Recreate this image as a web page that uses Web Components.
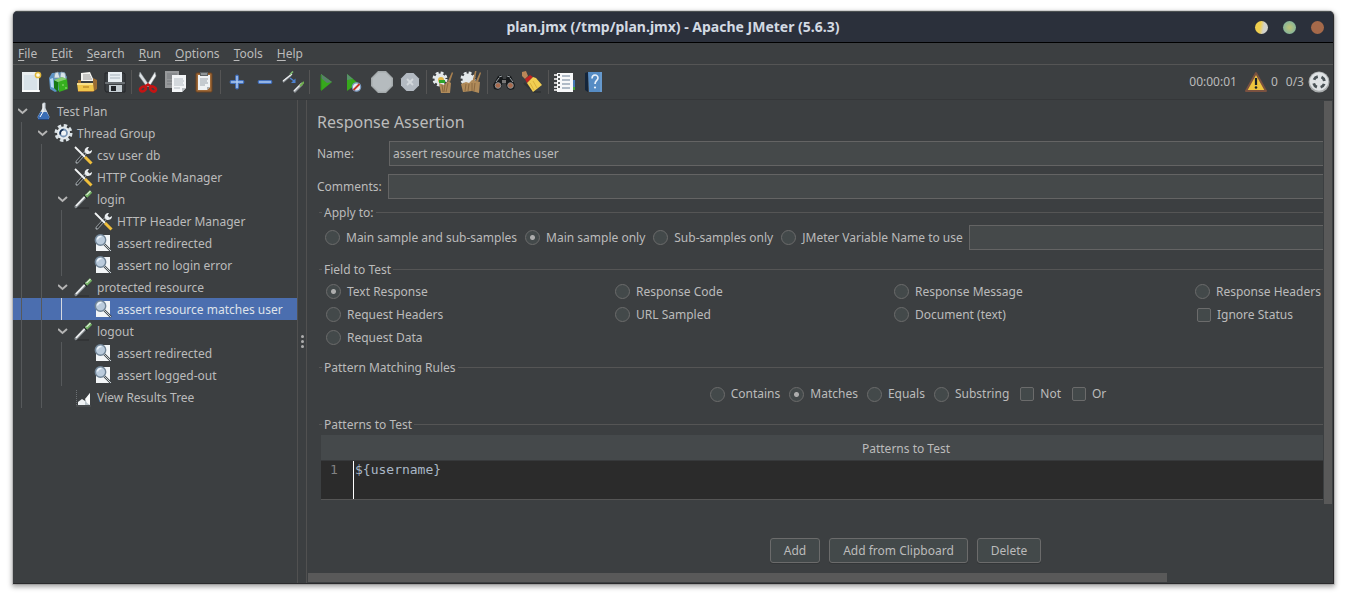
<!DOCTYPE html>
<html lang="en">
<head>
<meta charset="utf-8">
<title>plan.jmx (/tmp/plan.jmx) - Apache JMeter (5.6.3)</title>
<style>
  :root {
    --bg: #3c3f41;
    --text: #bbbbbb;
    --line: #515151;
    --field: #45494a;
    --edge: #646464;
    --thumb: #595959;
    --select: #4b6eaf;
  }
  html, body { height: 100%; }
  body {
    margin: 0;
    box-sizing: border-box;
    padding: 11px 13px 16px;
    background: #fff;
    color: var(--text);
    font: 12px/18px "Noto Sans", "Open Sans", sans-serif;
  }
</style>
</head>
<body>
<jm-app></jm-app>

<template id="jm-app">
  <style>
    :host { display: flex; flex-direction: column; height: 100%; box-sizing: border-box; min-height: 572px;
      background: var(--bg); border-radius: 5px 5px 0 0; overflow: hidden;
      box-shadow: 0 0 0 1px rgba(0,0,0,.1), 0 2px 5px 1px rgba(0,0,0,.35); border-right: 1px solid #2a2a2c; border-bottom: 1px solid #2a2a2c; }
    main { flex: 1; display: flex; min-height: 0; }
    jm-tree { flex: 0 0 284px; border-right: 1px solid var(--line); }
    jm-splitter { flex: 0 0 8px; border-right: 1px solid var(--line); }
    jm-scroll-pane { flex: 1; min-width: 0; }
  </style>
  <jm-titlebar>plan.jmx (/tmp/plan.jmx) - Apache JMeter (5.6.3)</jm-titlebar>
  <jm-menubar></jm-menubar>
  <jm-toolbar></jm-toolbar>
  <main>
    <jm-tree>
      <jm-node level="0" open icon="plan">Test Plan</jm-node>
      <jm-node level="1" open icon="gear">Thread Group</jm-node>
      <jm-node level="2" icon="tools">csv user db</jm-node>
      <jm-node level="2" icon="tools">HTTP Cookie Manager</jm-node>
      <jm-node level="2" open icon="sampler">login</jm-node>
      <jm-node level="3" icon="tools">HTTP Header Manager</jm-node>
      <jm-node level="3" icon="assert">assert redirected</jm-node>
      <jm-node level="3" icon="assert">assert no login error</jm-node>
      <jm-node level="2" open icon="sampler">protected resource</jm-node>
      <jm-node level="3" selected icon="assert">assert resource matches user</jm-node>
      <jm-node level="2" open icon="sampler">logout</jm-node>
      <jm-node level="3" icon="assert">assert redirected</jm-node>
      <jm-node level="3" icon="assert">assert logged-out</jm-node>
      <jm-node level="2" icon="results">View Results Tree</jm-node>
    </jm-tree>
    <jm-splitter></jm-splitter>
    <jm-scroll-pane><jm-assertion></jm-assertion></jm-scroll-pane>
  </main>
</template>

<template id="jm-titlebar">
  <style>
    :host { display: grid; grid-template-columns: 1fr auto 1fr; align-items: center; flex: 0 0 30px;
      background: #2b303b; border-top: 1px solid #4b5051; border-bottom: 1px solid #000; }
    h1 { grid-column: 2; margin: 0; font-size: 14px; line-height: 20px; font-weight: 700; color: #d3dae3; }
    div { display: flex; justify-content: flex-end; gap: 15px; padding-right: 9px; }
    button { width: 13px; height: 13px; padding: 0; border: 0; border-radius: 50%; }
    .min { background: linear-gradient(100deg, #f0cf4e 40%, #d2d2cc 65%); }
    .max { background: radial-gradient(#b8c17a 10%, #87b59a 70%); }
    .close { background: #a5694a; }
  </style>
  <h1><slot></slot></h1>
  <div><button class="min" aria-label="Minimize"></button><button class="max" aria-label="Maximize"></button><button class="close" aria-label="Close"></button></div>
</template>

<template id="jm-menubar">
  <style>
    :host { display: flex; flex: 0 0 21px; border-bottom: 1px solid #555; }
    nav { display: flex; margin-left: -2px; }
    button { font: inherit; color: inherit; background: none; border: 0; padding: 0 7px; line-height: 21px; }
    u { text-underline-offset: 2px; }
  </style>
  <nav>
    <button><u>F</u>ile</button><button><u>E</u>dit</button><button><u>S</u>earch</button><button><u>R</u>un</button><button><u>O</u>ptions</button><button><u>T</u>ools</button><button><u>H</u>elp</button>
  </nav>
</template>

<template id="jm-toolbar">
  <style>
    :host { display: flex; align-items: center; flex: 0 0 34px; border-bottom: 1px solid #353739; padding: 0 3px 0 4px; }
    button { width: 28px; height: 28px; padding: 3px; border: 0; background: none; display: block; }
    hr { width: 1px; height: 24px; margin: 0 2px; border: 0; background: #555; }
    .status { margin-left: auto; display: flex; align-items: center; gap: 4px; line-height: 20px; }
    .status button { width: 22px; height: 22px; padding: 0; }
    .time { margin-right: 4px; }
    .threads { margin-left: 4px; }
  </style>
</template>

<template id="jm-tree">
  <style>:host { display: block; }</style>
  <slot></slot>
</template>

<template id="jm-node">
  <style>
    :host { display: flex; height: 22px; align-items: center; white-space: nowrap; }
    :host([selected]) { background: var(--select); color: #dfe3ea; }
    i { flex: 0 0 20px; box-sizing: border-box; align-self: stretch; }
    i.guide { background: linear-gradient(#56595b, #56595b) 8px 0 / 1px 100% no-repeat; }
    :host([selected]) i.near { background-image: linear-gradient(#d5d9e0, #d5d9e0); }
    i.twist { display: flex; align-items: center; justify-content: center; }
    jm-icon { flex: 0 0 20px; height: 20px; margin-right: 4px; }
    span { padding-top: 2px; }
    .twist svg { width: 10px; height: 8px; }
  </style>
</template>

<template id="jm-splitter">
  <style>
    :host { display: flex; flex-direction: column; align-items: center; justify-content: center; gap: 2px; }
    i { width: 3px; height: 3px; border-radius: 50%; background: #adadad; }
  </style>
  <i></i><i></i><i></i>
</template>

<template id="jm-scroll-pane">
  <style>
    :host { display: grid; grid-template: minmax(0, 1fr) 10px / minmax(0, 1fr) 10px; }
    .view { overflow: hidden; }
    .v, .h { display: flex; }
    .v { flex-direction: column; padding: 1px 1px 0 0; }
    .h { padding: 0 0 1px 1px; }
    .v i, .h i { background: var(--thumb); }
    .v i { flex: 0 0 85.4%; margin-left: 1px; }
    .h i { flex: 0 0 84.6%; }
  </style>
  <div class="view"><slot></slot></div>
  <div class="v"><i></i></div>
  <div class="h"><i></i></div>
</template>

<template id="jm-group">
  <style>
    :host { display: block; }
    fieldset { margin: 0; padding: 0; border: 0; border-top: 1px solid #555; min-width: 0; }
    legend { margin-left: 3px; padding: 0 2px; line-height: 19px; }
  </style>
  <fieldset><legend></legend><slot></slot></fieldset>
</template>

<template id="jm-assertion">
  <style>
    :host { display: block; min-width: 1201px; box-sizing: border-box; padding: 10px 15px 10px 10px; }
    h2 { margin: 0 0 7px; font-size: 16px; line-height: 24px; font-weight: 400; }
    label { white-space: nowrap; }
    .row { display: flex; align-items: center; height: 25px; margin-bottom: 8px; }
    .row.last { margin-bottom: 4px; }
    .row label { margin-right: 6px; }
    .row .name { flex: 0 0 66px; }
    input[type=text] { flex: 1; min-width: 0; height: 25px; box-sizing: border-box; padding: 0 3px; border: 1px solid var(--edge);
      background: var(--field); color: inherit; font: inherit; border-radius: 0; outline: 0; }
    jm-group { margin-left: 2px; }
    .opt { display: inline-flex; align-items: center; gap: 6px; }
    input[type=radio], input[type=checkbox] { appearance: none; flex: none; width: 15px; height: 15px; margin: 0; box-sizing: border-box;
      border: 1px solid #6b6b6b; background: #43494a; border-radius: 50%; }
    input[type=checkbox] { width: 14px; height: 14px; margin-left: 2px; border-radius: 2px; }
    input[type=radio]:checked { background: radial-gradient(circle, #adadad 2px, #43494a 3px); }
    .apply { display: flex; align-items: center; gap: 8px; padding: 3px 0 10px 6px; }
    .apply input[type=text] { margin-left: -2px; }
    .fields { display: grid; grid-template-columns: 289px 279px 301px 1fr; grid-auto-rows: 23px; padding: 1px 0 9px 7px; }
    .rules { display: flex; justify-content: center; gap: 9px; height: 24px; padding: 5px 0 9px 4px; }
    table { width: calc(100% - 4px); margin: 1px 0 38px 2px; border-collapse: collapse; border-bottom: 1px solid #555; }
    th { height: 23px; padding: 2px 0 0; font-weight: 400; background: #45494b; border-bottom: 1px solid #37393b; }
    td { padding: 0; background: #2b2b2b; }
    .line { display: flex; height: 38px; font: 13px/18px "DejaVu Sans Mono", monospace; }
    .line span { flex: 0 0 32px; box-sizing: border-box; padding-left: 9px; color: #828282; }
    textarea { flex: 1; height: 38px; box-sizing: border-box; padding: 0 1px; border: 0; border-left: 1px solid #fff; resize: none; overflow: hidden;
      outline: 0; background: none; color: #a9b7c6; font: inherit; }
    .actions { display: flex; justify-content: center; gap: 9px; padding-left: 1px; }
    .actions button { height: 25px; box-sizing: border-box; padding: 0 13px; border: 1px solid #6b6b6b; border-radius: 3px;
      background: #43494a; color: inherit; font: inherit; box-shadow: 0 1px 0 #333638; }
  </style>
  <h2>Response Assertion</h2>
  <div class="row"><label class="name" for="name">Name:</label><input type="text" id="name" value="assert resource matches user"></div>
  <div class="row last"><label for="comments">Comments:</label><input type="text" id="comments"></div>
  <jm-group label="Apply to:">
    <div class="apply">
      <label class="opt"><input type="radio" name="apply">Main sample and sub-samples</label>
      <label class="opt"><input type="radio" name="apply" checked>Main sample only</label>
      <label class="opt"><input type="radio" name="apply">Sub-samples only</label>
      <label class="opt"><input type="radio" name="apply">JMeter Variable Name to use</label>
      <input type="text" aria-label="JMeter variable name">
    </div>
  </jm-group>
  <jm-group label="Field to Test">
    <div class="fields">
      <label class="opt"><input type="radio" name="field" checked>Text Response</label>
      <label class="opt"><input type="radio" name="field">Response Code</label>
      <label class="opt"><input type="radio" name="field">Response Message</label>
      <label class="opt"><input type="radio" name="field">Response Headers</label>
      <label class="opt"><input type="radio" name="field">Request Headers</label>
      <label class="opt"><input type="radio" name="field">URL Sampled</label>
      <label class="opt"><input type="radio" name="field">Document (text)</label>
      <label class="opt"><input type="checkbox">Ignore Status</label>
      <label class="opt"><input type="radio" name="field">Request Data</label>
    </div>
  </jm-group>
  <jm-group label="Pattern Matching Rules">
    <div class="rules">
      <label class="opt"><input type="radio" name="rule">Contains</label>
      <label class="opt"><input type="radio" name="rule" checked>Matches</label>
      <label class="opt"><input type="radio" name="rule">Equals</label>
      <label class="opt"><input type="radio" name="rule">Substring</label>
      <label class="opt"><input type="checkbox">Not</label>
      <label class="opt"><input type="checkbox">Or</label>
    </div>
  </jm-group>
  <jm-group label="Patterns to Test">
    <table>
      <thead><tr><th>Patterns to Test</th></tr></thead>
      <tbody><tr><td><div class="line"><span>1</span><textarea aria-label="Pattern" spellcheck="false">${username}</textarea></div></td></tr></tbody>
    </table>
  </jm-group>
  <div class="actions"><button>Add</button><button>Add from Clipboard</button><button>Delete</button></div>
</template>

<script>
const GEAR_RIM = 'stroke-width="3" stroke-dasharray="2.7 2"';
const ICONS = {
  // Toolbar, 22 x 22
  new: '<path d="M2 1h17v20H2z" fill="#e9eef0"/><path d="M4 4h13v15H4z" fill="#d8e2e8"/><path d="M2 20h18" stroke="#fff" stroke-width="1.5"/><circle cx="18" cy="4" r="2.6" fill="#fffbe0" stroke="#e0b83c" stroke-width="1.5"/>',
  templates: '<path d="M1 7l3-5 12-1 3 5-5 12-7 3-5-3z" fill="#5c93c4"/><path d="M6 7l1-5 3-1 2 6zM12 6l1-5 4 1 1 6z" fill="#d9e3e9" stroke="#7f98a8" stroke-width=".7"/><path d="M2 8l3-1 1 10-3-1z" fill="#b9d9f4"/><path d="M6 9l4 2v10l-4-4z" fill="#187a12"/><path d="M10 10l9-2 1 10-9 3z" fill="#36b01e"/><path d="M6 9l8-3 5 2-9 3z" fill="#86cf6e"/><path d="M14 14h2M17 17h2" stroke="#9be07c"/>',
  open: '<path d="M5 2l9-1 4 9H5z" fill="#f4f4f0"/><path d="M7 4h7M7 6h8M7 8h9" stroke="#999" /><path d="M2 9h3v3h12V7l4 2v9l-4 3H2z" fill="#9b6c33"/><path d="M1 12h16l1 8H2z" fill="#f0c64c"/><path d="M1 12h16v2H1z" fill="#fae08a"/><path d="M7 16h6" stroke="#a8741f"/>',
  save: '<path d="M1 2h19l1 1v18H2l-1-2z" fill="#3b3f42" stroke="#24272a"/><path d="M4 1h14v10H4z" fill="#e8eef2"/><path d="M6 4h10M6 7h10" stroke="#a6b2bb"/><path d="M5 14h13v7H5z" fill="#c5cdd2"/><path d="M7 15h5v5H7z" fill="#202327"/><path d="M1 12h20" stroke="#9ba2a6"/>',
  cut: '<path d="M3 1l9 13-2 2L2 5z" fill="#dce1e4" stroke="#8b9296" stroke-width=".5"/><path d="M18 1l-8 13 2 2 7-11z" fill="#f2f4f5" stroke="#8b9296" stroke-width=".5"/><g fill="none" stroke="#c31414" stroke-width="2.6"><ellipse cx="6" cy="18" rx="3" ry="2.2" transform="rotate(-30 6 18)"/><ellipse cx="16" cy="18" rx="3" ry="2.2" transform="rotate(30 16 18)"/><path d="M8 15.500l3-2 3 2"/></g>',
  copy: '<path d="M0 0h14v17H0z" fill="#97999b"/><path d="M2 3h10M2 5h10M2 7h10M2 10h5M2 13h5" stroke="#777b7e"/><path d="M7 4h14v13l-4 4H7z" fill="#f3f5f7"/><path d="M17 21v-4h4z" fill="#b9bec2"/><path d="M9 8h9M9 10h10M9 12h9M9 14h10M9 17h6" stroke="#b3bbc2"/>',
  paste: '<rect x="3" y="2" width="16" height="19" rx="1" fill="#a06a38" stroke="#6a4321"/><path d="M5 4h12v12l-3 3H5z" fill="#eff2f4"/><path d="M14 19v-3h3z" fill="#a9b0b5"/><path d="M7 1h8v4H7z" fill="#5d6366"/><path d="M8 3h6" stroke="#c5cacc"/><path d="M7 8h8M7 10h7M7 12h8M7 14h5" stroke="#9aa3ab"/>',
  plus: '<path d="M11 5.500v11M5.500 11h11" stroke="#4472bf" stroke-width="3.800" stroke-linecap="round"/><path d="M11 5v12M5 11h12" stroke="#aecbf2" stroke-width="1.500"/>',
  minus: '<path d="M5.500 11h11" stroke="#4472bf" stroke-width="3.800" stroke-linecap="round"/><path d="M5 11h12" stroke="#aecbf2" stroke-width="1.500"/>',
  toggle: '<path d="M1 11L9 4" stroke="#8f9499" stroke-width="2"/><path d="M1 10L10 3" stroke="#eceeef" stroke-width="1.200"/><path d="M8 3.500l3-3" stroke="#7fbb70" stroke-width="1.600"/><path d="M12 21l8-8" stroke="#8f9499" stroke-width="2.600"/><path d="M12 20l8-8" stroke="#eceeef" stroke-width="1.200"/><path d="M18 15l4-4" stroke="#6fae4e" stroke-width="2"/><path d="M8 7l4 3" stroke="#4f83d2" stroke-width="1.400"/><path d="M13.500 7.500v4.500H9z" fill="#4f83d2"/>',
  run: '<path d="M6 3l11 8-11 9z" fill="#36a81c"/><path d="M6 3l11 8-5 1-6-5z" fill="#58806a"/><path d="M6 4v15" stroke="#2c8c18"/>',
  runnow: '<path d="M4 3l11 9-11 8z" fill="#36a81c"/><path d="M4 3l6 5-6 1z" fill="#58906a"/><circle cx="13.5" cy="16" r="4.2" fill="#e9ecf2" stroke="#7898be" stroke-width="1.2"/><path d="M10.5 19l6-6" stroke="#c43426" stroke-width="1.8"/>',
  stop: '<path d="M7 0h8l7 7v8l-7 7H7l-7-7V7z" fill="#a4aaac"/><path d="M7.500 1.500h7l6 6v7l-6 6h-7l-6-6v-7z" fill="#b5bbbe"/>',
  shutdown: '<path d="M7.500 2h7l5.500 5.500v7L14.500 20h-7L2 14.500v-7z" fill="#b3bac2"/><path d="M8 8l6 6M14 8l-6 6" stroke="#d3d8dc" stroke-width="1.800"/>',
  clear: `<circle cx="8" cy="8" r="5.500" fill="#e3e8ea"/><circle cx="8" cy="8" r="6" fill="none" stroke="#e3e8ea" ${GEAR_RIM}/><circle cx="9" cy="9" r="3" fill="#dfb646"/><path d="M7 9h6v3H7z" fill="#2fa52a"/><path d="M20 1l1 1-3 9-2-1z" fill="#a98150"/><path d="M7 12l5 2 4-4 3 2-1 10H9z" fill="#b08b5a"/><path d="M10 14l1 7M13 13l-1 8M16 12l-2 9" stroke="#80603a" stroke-width=".8"/>`,
  clearall: `<circle cx="8" cy="8" r="5.500" fill="#e3e8ea"/><circle cx="8" cy="8" r="6" fill="none" stroke="#e3e8ea" ${GEAR_RIM}/><path d="M15 0h1.500l-2 11-2-1zM20 1l1 1-3 9-2-1z" fill="#a98150"/><path d="M1 13l5-2 3 1 3-3 8 2-1 11-7-2-9 1z" fill="#b08b5a"/><path d="M6 13l-1 7M9 13l-1 7M12 12v8M15 12l-1 8" stroke="#80603a" stroke-width=".8"/>`,
  search: '<path d="M5 5l4-1 1 4h3l1-4 4 1 4 9-1 4-4 1-3-2-2-7h-2l-2 7-3 2-4-1-1-4z" fill="#171a1c"/><path d="M6 6l3-1M14 5l3 1M3 11l3-4M20 11l-3-4" stroke="#9da4a8"/><g fill="#a96a4c" stroke="#8c9194"><circle cx="5" cy="14.500" r="2.800"/><circle cx="17.500" cy="14.500" r="2.800"/></g><path d="M9 9h4v3H9z" fill="#777"/>',
  broom: '<path d="M3 12l10 9h7" stroke="#313436" stroke-width="2" fill="none"/><path d="M1 1l4-1 2 5-3 3-3-3z" fill="#bb8758"/><path d="M4 8l5-4 3 2-6 6z" fill="#c02222"/><path d="M6 12l6-6 3 1 6 7-9 7z" fill="#f2cf52"/><path d="M9 12l4 7M12 10l4 7" stroke="#dcb23a"/>',
  list: '<path d="M17 9h4v8h-4z" fill="#4579b5"/><path d="M17 16h4v3h-4z" fill="#42a33a"/><path d="M3 2h16v19H3z" fill="#f7f8f9"/><path d="M8 5h8M8 9h8M8 13h8M8 17h8" stroke="#6b7f96" stroke-width="1.200"/><path d="M0 4h4M0 8h4M0 12h4M0 16h4M0 19h4" stroke="#fff" stroke-width="1.5"/><path d="M4 4h2M4 8h2M4 12h2M4 16h2" stroke="#25282a" stroke-width="1.6"/>',
  help: '<path d="M3 2l3-1v20l-3-2z" fill="#14253a"/><path d="M6 1h14v20H7z" fill="#568cc4"/><path d="M19 1v20" stroke="#77a6d6"/><path d="M10 7.500c0-4.500 6-4.500 6-.5 0 2.500-3 2.500-3 6" fill="none" stroke="#e9f1fa" stroke-width="1.6"/><circle cx="13" cy="16.500" r="1.100" fill="#e9f1fa"/>',
  warn: '<path d="M11 2l10 18H1z" fill="#eec43e" stroke="#7a5140" stroke-width="2" stroke-linejoin="round"/><path d="M11 7v7" stroke="#16202a" stroke-width="2.2"/><circle cx="11" cy="16.500" r="1.300" fill="#16202a"/>',
  net: '<circle cx="11" cy="11" r="10.500" fill="#a9adae"/><circle cx="11" cy="10.500" r="9.300" fill="#dfe3e5"/><circle cx="11" cy="11" r="5.500" fill="none" stroke="#4a5357" stroke-width="2.800" stroke-dasharray="4.800 3.840" stroke-dashoffset="-1.920"/>',
  // Tree, 20 x 20
  plan: '<path d="M9.500 2l2-.5 1 .5v5l4 9-1 2h-10l-1-2 5-9z" fill="#cdd5dc"/><path d="M7.500 11h6l3 5-1 2h-10l-1-2z" fill="#3a6db5"/><path d="M10 3v8l-3 5" stroke="#fff" fill="none"/><path d="M5 18.500h11" stroke="#25457a"/>',
  gear: '<circle cx="10.500" cy="10" r="6.500" fill="#e7ecef"/><circle cx="10.500" cy="10" r="7.500" fill="none" stroke="#dce3e7" stroke-width="3" stroke-dasharray="3.400 2.490"/><circle cx="10.500" cy="10" r="4.400" fill="#7b97b8"/><circle cx="10.500" cy="10" r="2.600" fill="#f0f4f7"/><path d="M7.500 11.500a3.600 3.600 0 0 1 3-5" stroke="#142c4e" stroke-width="1.700" fill="none"/>',
  tools: '<path d="M4 17l9-10" stroke="#9aa0a4" stroke-width="3.200" stroke-linecap="round"/><path d="M4 17l8-9" stroke="#2d3032" stroke-width="1.600"/><path d="M12 7c-1-3 1-5 4-5l-1.500 2.500 2 2L19 5c0 3-2 4-5 4z" fill="#e9edf0"/><path d="M2 2l10 10" stroke="#f3f5f6" stroke-width="1.800"/><path d="M12 12l6.500 6.500" stroke="#f0bf3b" stroke-width="3"/>',
  sampler: '<path d="M3 19h13" stroke="#2a2c2e"/><path d="M3 17.500L13 7" stroke="#858b8f" stroke-width="3.200" stroke-linecap="round"/><path d="M3 17L14 5.500" stroke="#f4f5f6" stroke-width="1.600"/><path d="M11 6l3 3.500" stroke="#202325" stroke-width="1.200"/><path d="M13 7.500l5-5" stroke="#6fae60" stroke-width="3.400"/><path d="M13.500 6l4-4" stroke="#d8ecd0" stroke-width="1.200"/>',
  assert: '<path d="M5 2h12v16H3V9z" fill="#f2f5f7"/><path d="M11 11l7 7" stroke="#42484c" stroke-width="2.400"/><path d="M11 11l7 7" stroke="#c9cfd3"/><circle cx="7.500" cy="7" r="5.200" fill="#bacbdc" stroke="#708496" stroke-width="1.400"/><path d="M4.500 6.500a3.500 3.500 0 0 1 4-3" stroke="#eef5fb" stroke-width="1.600" fill="none"/>',
  results: '<path d="M3.500 3v16H18" stroke="#6b7073" fill="none" stroke-dasharray="1 1"/><path d="M5 17l4-4 3 1 5-8v12H5z" fill="#b9c3c9"/><path d="M5 15l4-3 3 2v4H5z" fill="#eef1f3"/><path d="M12 12l5-6v12l-3-2z" fill="#fafbfb"/>'
};

function define(tag, setup) {
  customElements.define(tag, class extends HTMLElement {
    constructor() {
      super();
      const root = this.attachShadow({ mode: 'open' });
      const tpl = document.getElementById(tag);
      if (tpl) root.append(tpl.content.cloneNode(true));
    }
    connectedCallback() {
      if (setup && !this.ready) { this.ready = true; setup(this.shadowRoot, this); }
    }
  });
}

define('jm-icon', (root, el) => {
  const box = el.getAttribute('box');
  root.innerHTML = `<style>:host{display:block}svg{display:block;width:100%;height:100%}</style><svg viewBox="0 0 ${box} ${box}" aria-hidden="true">${ICONS[el.getAttribute('name')]}</svg>`;
});

define('jm-titlebar');
define('jm-menubar');

define('jm-toolbar', root => {
  const groups = ['new templates open save', 'cut copy paste', 'plus minus toggle', 'run runnow stop shutdown', 'clear clearall', 'search broom', 'list help'];
  const button = name => `<button aria-label="${name}"><jm-icon box="22" name="${name}"></jm-icon></button>`;
  const holder = document.createElement('template');
  holder.innerHTML = groups.map(g => g.split(' ').map(button).join('')).join('<hr>') +
    `<div class="status"><span class="time">00:00:01</span>${button('warn')}<span>0</span><span class="threads">0/3</span>${button('net')}</div>`;
  root.append(holder.content);
});

define('jm-tree');

define('jm-node', (root, el) => {
  const level = Number(el.getAttribute('level'));
  const holder = document.createElement('template');
  let html = '';
  for (let i = 0; i < level; i++) html += `<i class="guide${i === level - 1 ? ' near' : ''}"></i>`;
  html += `<i class="twist">${el.hasAttribute('open') ? '<svg viewBox="0 0 10 8"><path d="M0 2l4.500 4L9 2" fill="none" stroke="#b4b4b4" stroke-width="2"/></svg>' : ''}</i>`;
  html += `<jm-icon box="20" name="${el.getAttribute('icon')}"></jm-icon><span><slot></slot></span>`;
  holder.innerHTML = html;
  root.append(holder.content);
});

define('jm-splitter');
define('jm-scroll-pane');

define('jm-group', (root, el) => {
  root.querySelector('legend').textContent = el.getAttribute('label');
});

define('jm-assertion');
define('jm-app');
</script>
</body>
</html>
